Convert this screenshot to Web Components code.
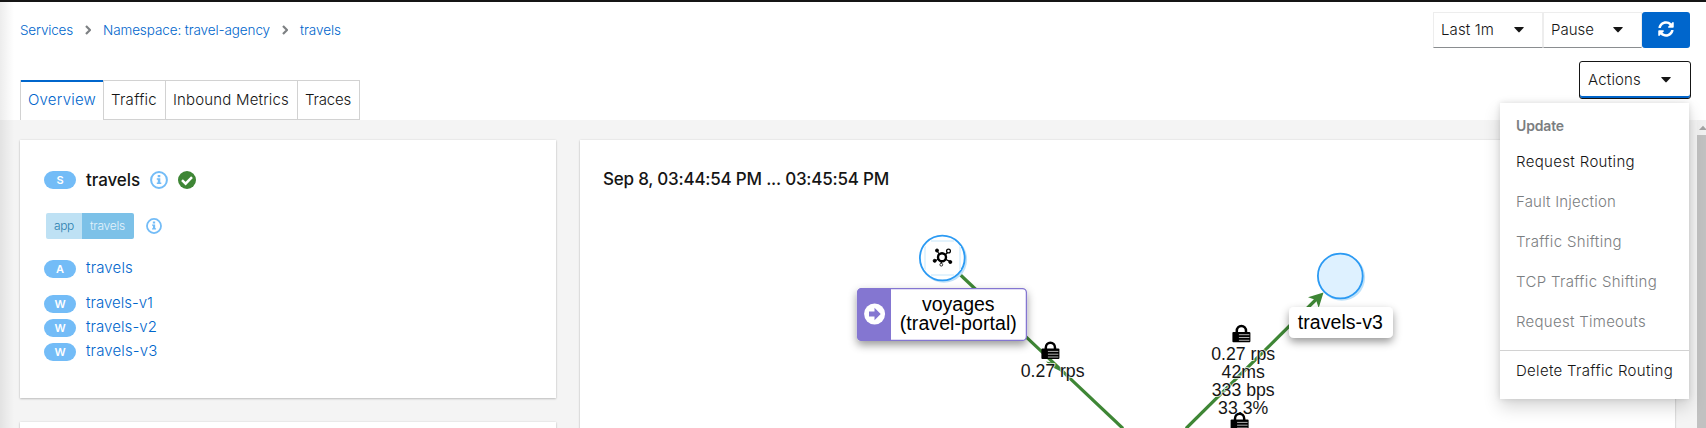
<!DOCTYPE html>
<html lang="en"><head><meta charset="utf-8"><title>travels</title>
<style>html,body{margin:0;height:428px;overflow:hidden;background:#fff}body{font:350 15px Inter,"Open Sans",sans-serif;color:#151515}</style></head>
<body><service-page></service-page>
<script>
const define=(name,html,setup)=>customElements.define(name,class extends HTMLElement{
  connectedCallback(){if(this.shadowRoot)return;this.attachShadow({mode:'open'}).innerHTML=html;if(setup)setup(this,this.shadowRoot);}
});
/* text run whose tracking is adjusted to a given width */
define('fit-text','<style>:host{display:inline-block;white-space:pre;line-height:20px}</style><span><slot></slot></span>',(el,r)=>{
  const w=+el.getAttribute('w'),s=r.querySelector('span');
  const n=el.textContent.length,m=s.getBoundingClientRect().width;
  el.style.width=w+'px';s.style.letterSpacing=((w-m)/n).toFixed(3)+'px';
});
define('kind-badge','<style>:host{display:flex;width:32px;height:18px;border-radius:9px;background:#73bcf7;color:#fff;font-size:11px;font-weight:600;align-items:center;justify-content:center;flex:none}</style><slot></slot>');
define('info-icon','<style>:host{display:block;width:var(--s,18px);height:var(--s,18px);flex:none}svg{display:block}</style><svg width="100%" height="100%" viewBox="0 0 18 18"><circle cx="9" cy="9" r="7.9" fill="none" stroke="#73bcf7" stroke-width="2"/><path fill="#73bcf7" d="M7.7 3.9h2.6v2.4H7.7zM6.8 7.3h3.5v4.2h1v1.4H6.8v-1.4h1V8.7h-1z"/></svg>');
define('check-icon','<style>:host{display:block;width:18px;height:18px}svg{display:block}</style><svg width="18" height="18"><circle cx="9" cy="9" r="9" fill="#3e8635"/><path d="M4 9.2 7.6 12.7 14 6.2" fill="none" stroke="#fff" stroke-width="2.5"/></svg>');
define('bread-crumbs',`<style>:host{display:flex;align-items:center;height:20px;font-size:13.5px;color:#06c}svg{margin:0 12px;flex:none}</style>
<fit-text w="53">Services</fit-text><svg width="6" height="10" style="margin-right:12px"><path d="M1 1l4 4-4 4" fill="none" stroke="#7d8083" stroke-width="2.2"/></svg><fit-text w="167">Namespace: travel-agency</fit-text><svg width="6" height="10"><path d="M1 1l4 4-4 4" fill="none" stroke="#7d8083" stroke-width="2.2"/></svg><fit-text w="41">travels</fit-text>`);
define('nav-tab',`<style>:host{display:block;box-sizing:border-box;height:40px;border:1px solid #d2d2d2;border-left:0;padding:9px 8px 0 7px}:host([active]){border-left:1px solid #d2d2d2;border-top:0;border-bottom:0;color:#06c;padding:10px 7px 0;box-shadow:inset 0 2px #06c}</style><slot></slot>`);
define('nav-tabs','<style>:host{display:flex;height:40px}</style><slot></slot>');
define('drop-toggle',`<style>:host{box-sizing:border-box;display:flex;align-items:center;justify-content:space-between;height:36px;padding:0 18px 0 7px;border:1px solid #ededed;border-bottom-color:#8a8d90}
:host([open]){border:1px solid #151515;border-radius:3px;height:38px;padding:0 19px 0 8px;box-shadow:inset 0 -2px #06c}</style><slot></slot><svg width="10" height="6"><path d="M.8 0h8.4q1 0 .4.8L5.6 5.1q-.6.6-1.2 0L.4.8Q-.2 0 .8 0" fill="#151515"/></svg>`);
define('refresh-button',`<style>:host{display:flex;box-sizing:border-box;width:48px;height:36px;background:#06c;border-radius:3px;align-items:center;justify-content:center;padding-bottom:2px}</style><svg width="16" height="16" viewBox="0 0 512 512" fill="#fff"><path d="M370.72 133.28C339.458 104.008 298.888 87.962 255.848 88c-77.458.068-144.328 53.178-162.791 126.85-1.344 5.363-6.122 9.15-11.651 9.15H24.103c-7.498 0-13.194-6.807-11.807-14.176C33.933 94.924 134.813 8 256 8c66.448 0 126.791 26.136 171.315 68.685L463.03 40.97C478.149 25.851 504 36.559 504 57.941V192c0 13.255-10.745 24-24 24H345.941c-21.382 0-32.09-25.851-16.971-40.971l41.75-41.749zM32 296h134.059c21.382 0 32.09 25.851 16.971 40.971l-41.75 41.75c31.262 29.273 71.835 45.319 114.876 45.28 77.418-.07 144.315-53.144 162.787-126.849 1.344-5.363 6.122-9.15 11.651-9.15h57.304c7.498 0 13.194 6.807 11.807 14.176C478.067 417.076 377.187 504 256 504c-66.448 0-126.791-26.136-171.315-68.685L48.97 471.03C33.851 486.149 8 475.441 8 454.059V320c0-13.255 10.745-24 24-24z"/></svg>`);
define('menu-item',`<style>:host{display:flex;box-sizing:border-box;height:40px;align-items:center;padding:0 16px}:host([disabled]){color:#7b7e81}:host([heading]){height:34px;font-size:14px;font-weight:600;color:#7b7e81;padding-top:2px}:host([last]){border-top:1px solid #d2d2d2;margin-top:8px;height:41px}</style><slot></slot>`);
define('actions-menu',`<style>:host{display:block;box-sizing:border-box;width:189px;height:296px;padding-top:5px;background:#fff;box-shadow:0 8px 16px rgba(3,3,3,.16),0 0 6px rgba(3,3,3,.12)}</style>
<menu-item heading><fit-text w="48">Update</fit-text></menu-item><menu-item><fit-text w="119">Request Routing</fit-text></menu-item><menu-item disabled><fit-text w="100">Fault Injection</fit-text></menu-item><menu-item disabled><fit-text w="106">Traffic Shifting</fit-text></menu-item><menu-item disabled><fit-text w="141">TCP Traffic Shifting</fit-text></menu-item><menu-item disabled><fit-text w="130">Request Timeouts</fit-text></menu-item><menu-item last><fit-text w="157">Delete Traffic Routing</fit-text></menu-item>`);
define('info-card','<style>:host{display:block;box-sizing:border-box;background:#fff;box-shadow:0 1px 2px rgba(3,3,3,.2),0 0 2px rgba(3,3,3,.1)}</style><slot></slot>');
define('label-tag','<style>:host{display:flex;width:88px;height:26px;border-radius:2px;overflow:hidden;font-size:12px;margin-left:2px}div{display:flex;align-items:center;box-sizing:border-box;padding-left:8px}.k{width:36px;background:#bee1f4;color:#2b7fae}.v{width:52px;background:#7cc1e8;color:#e4f3fb}</style><div class="k"><fit-text w="20">app</fit-text></div><div class="v"><fit-text w="35">travels</fit-text></div>');
define('service-summary',`<style>:host{display:block;padding:31px 24px 0}.r{display:flex;gap:10px;height:18px;align-items:center;color:#06c}.r fit-text{position:relative;top:-1px}.r.h fit-text{top:0}</style>
<div class="r h" style="color:#151515;font-size:17px;font-weight:500"><kind-badge>S</kind-badge><fit-text w="54">travels</fit-text><info-icon></info-icon><check-icon></check-icon></div>
<div class="r" style="height:26px;margin-top:24px;gap:12px"><label-tag></label-tag><info-icon style="--s:16px"></info-icon></div>
<div class="r" style="margin-top:21px"><kind-badge>A</kind-badge><fit-text w="47">travels</fit-text></div>
<div class="r" style="margin-top:17px"><kind-badge>W</kind-badge><fit-text w="67">travels-v1</fit-text></div>
<div class="r" style="margin-top:6px"><kind-badge>W</kind-badge><fit-text w="71">travels-v2</fit-text></div>
<div class="r" style="margin-top:6px"><kind-badge>W</kind-badge><fit-text w="71.5">travels-v3</fit-text></div>`);
define('traffic-graph',`<style>:host{display:block}svg{display:block}text{font-family:"Liberation Sans",Arial,sans-serif;font-weight:400;text-anchor:middle}.n{font-size:19.5px;fill:#000}.e{font-size:17.7px;fill:#151515;stroke:#fff;stroke-opacity:.75;stroke-width:2px;paint-order:stroke}</style>
<svg width="1095" height="208" viewBox="580 220 1095 208"><defs><filter id="s" x="-20%" y="-30%" width="140%" height="180%"><feDropShadow dx="0" dy="4" stdDeviation="4" flood-opacity=".4"/></filter>
<g id="lock"><path d="M4.4 9V6.7a4.6 5 0 0 1 9.2 0V9" fill="none" stroke="#000" stroke-width="2.5"/><rect y="7.6" width="18" height="10.4" rx="1" fill="#000"/><path d="M6.5 10.4H17M6.5 13.2H17M6.5 16H17" stroke="#ddd" stroke-width=".8"/></g></defs>
<g stroke="#3e8635" stroke-width="3.2"><path d="M960 274.5 1123 428.5"/><path d="M1186 428.5 1317 298.5"/></g>
<path d="M1323.5 292.5 1308 297.3 1316 300 1318.7 308z" fill="#3e8635"/><path d="M1046 361.5 1055 363 1060 371 1052 367z" fill="#3e8635"/>
<circle cx="943.8" cy="259.5" r="23.3" fill="#bee1f9"/><circle cx="942.3" cy="258" r="22.4" fill="#fff" stroke="#2b9af3" stroke-width="1.8"/><path d="M925 246V270M960 246V270M931 241H954M931 275H954" stroke="#e3f3fd" stroke-width="2"/>
<g stroke="#000" fill="#000"><path d="M937 251 941 256M948.6 251.5 944 256M935 261 940 258M950.2 261.6 945 259M941.3 263.5V260" stroke-width="1.2"/><circle cx="942" cy="257.3" r="4" fill="#fff" stroke-width="2.4"/><circle cx="937" cy="250.5" r="1.5"/><circle cx="948.5" cy="251" r="1.9" fill="#fff" stroke-width="1.3"/><circle cx="934.7" cy="260.8" r="1.5"/><circle cx="950.3" cy="262" r="1.5"/><circle cx="941.3" cy="264.7" r="1.4" fill="#fff" stroke-width=".8"/></g>
<circle cx="1341.8" cy="277.5" r="23.3" fill="#bee1f9"/><circle cx="1340.3" cy="276" r="22.4" fill="#def1ff" stroke="#2b9af3" stroke-width="1.8"/>
<g filter="url(#s)"><rect x="857.6" y="288.6" width="168.8" height="51.8" rx="4" fill="#fff" stroke="#8476d1" stroke-width="1.3"/><path d="M891 288v53H862a5 5 0 0 1-5-5V293a5 5 0 0 1 5-5z" fill="#8476d1"/></g>
<circle cx="874.6" cy="314" r="10.5" fill="#fff"/><path d="M869 311.5h5.5v-3.7l6.2 6.2-6.2 6.2v-3.7H869z" fill="#8476d1"/>
<text class="n" x="958.3" y="311">voyages</text><text class="n" x="958.3" y="330" textLength="117">(travel-portal)</text>
<g filter="url(#s)"><rect x="1289" y="307" width="104" height="31" rx="5" fill="#fff"/></g><text class="n" x="1340.3" y="328.5" textLength="85">travels-v3</text>
<text class="e" x="1052.6" y="377">0.27 rps</text><text class="e" x="1243.2" y="360">0.27 rps</text><text class="e" x="1243.2" y="378">42ms</text><text class="e" x="1243.2" y="396">333 bps</text><text class="e" x="1243.2" y="414">33.3%</text>
<use href="#lock" x="1041.4" y="341"/><use href="#lock" x="1232.4" y="324.3"/><use href="#lock" x="1230.6" y="412"/></svg>`);
define('service-page',`<style>:host{display:block;position:relative;width:1706px;height:428px;overflow:hidden;background:#f4f4f4}
header{box-sizing:border-box;height:120px;background:#fff;border-top:2px solid #151515;padding:0 16px 0 20px;display:flex;justify-content:space-between}
.left{display:flex;flex-direction:column;justify-content:space-between;padding-top:18px}.right{display:flex;flex-direction:column;align-items:flex-end;padding-top:10px;gap:13px}.row{display:flex}.act{margin-right:-1px}
main{display:flex;gap:24px;padding:20px 0 0 20px}.col{width:536px;display:flex;flex-direction:column;gap:24px}.shade{position:absolute;left:0;top:2px;bottom:0;width:14px;background:linear-gradient(90deg,rgba(3,3,3,.075),rgba(3,3,3,.04) 45%,transparent)}
actions-menu{position:absolute;left:1500px;top:103px}.bar{position:absolute;right:0;top:120px;width:9px;height:308px;background:#f1f1f1;overflow:hidden}.bar svg{display:block;height:15px}.bar div{height:293px;background:#c1c1c1}
.date{padding:29px 23px 0;height:51px;font-size:17px;font-weight:450}</style>
<header><div class="left"><bread-crumbs></bread-crumbs><nav-tabs><nav-tab active><fit-text w="68">Overview</fit-text></nav-tab><nav-tab><fit-text w="46">Traffic</fit-text></nav-tab><nav-tab><fit-text w="116">Inbound Metrics</fit-text></nav-tab><nav-tab><fit-text w="46">Traces</fit-text></nav-tab></nav-tabs></div>
<div class="right"><div class="row"><drop-toggle style="width:110px"><fit-text w="53">Last 1m</fit-text></drop-toggle><drop-toggle style="width:99px"><fit-text w="43">Pause</fit-text></drop-toggle><refresh-button></refresh-button></div><drop-toggle class="act" open style="width:112px"><fit-text w="53">Actions</fit-text></drop-toggle></div></header>
<main><div class="col"><info-card style="height:258px"><service-summary></service-summary></info-card><info-card style="height:20px"></info-card></div>
<info-card style="width:1095px;height:300px"><div class="date"><fit-text w="286">Sep 8, 03:44:54 PM ... 03:45:54 PM</fit-text></div><traffic-graph></traffic-graph></info-card></main>
<div class="shade"></div><div class="bar"><svg width="14" height="15"><path d="M2 10h8L6 5.8z" fill="#a3a3a3"/></svg><div></div></div><actions-menu></actions-menu>`);
</script></body></html>
